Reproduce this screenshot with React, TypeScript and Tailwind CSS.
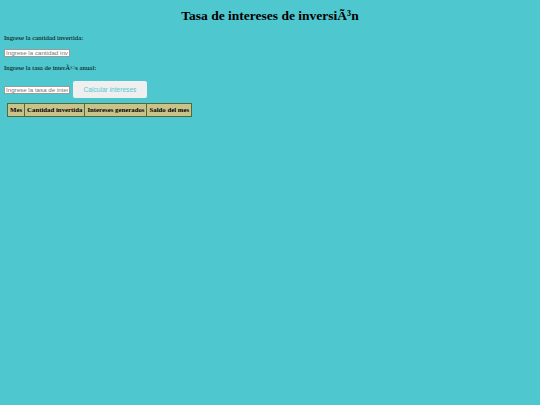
export default function App() {
  const columns = ["Mes", "Cantidad invertida", "Intereses generados", "Saldo del mes"];

  return (
    <div className="min-h-screen bg-[#4fc7ce] px-[4px] pt-[8px] font-['Liberation_Serif',serif] text-black">
      <h1 className="text-center text-[13.5px] font-bold leading-[16px]">Tasa de intereses de inversiÃ³n</h1>

      <p className="mt-[9px] text-[6.8px] leading-[9px]">Ingrese la cantidad invertida:</p>
      <input
        type="text"
        placeholder="Ingrese la cantidad invertida"
        className="mt-[7px] block h-[8px] w-[66px] border border-[#9a9a9a] bg-white px-[1px] font-['Liberation_Sans',sans-serif] text-[6.2px] placeholder:text-[#777]"
      />

      <p className="mt-[6px] text-[6.8px] leading-[9px]">Ingrese la tasa de interÃ©s anual:</p>

      <div className="mt-[9px] flex items-center gap-[3px]">
        <input
          type="text"
          placeholder="Ingrese la tasa de interés"
          className="block h-[8px] w-[66px] border border-[#9a9a9a] bg-white px-[1px] font-['Liberation_Sans',sans-serif] text-[6.2px] placeholder:text-[#777]"
        />
        <button className="h-[17px] w-[74px] rounded-[2px] bg-[#efefef] font-['Liberation_Sans',sans-serif] text-[6.6px] text-[#55c9cf]">
          Calcular intereses
        </button>
      </div>

      <table className="mt-[5px] ml-[3px] border-collapse border border-[#4d6b3c] bg-[#c9c38a]">
        <thead>
          <tr>
            {columns.map((c) => (
              <th key={c} className="border border-[#4d6b3c] px-[2px] py-[2px] text-[6.8px] font-bold leading-[8px]">
                {c}
              </th>
            ))}
          </tr>
        </thead>
      </table>
    </div>
  );
}
